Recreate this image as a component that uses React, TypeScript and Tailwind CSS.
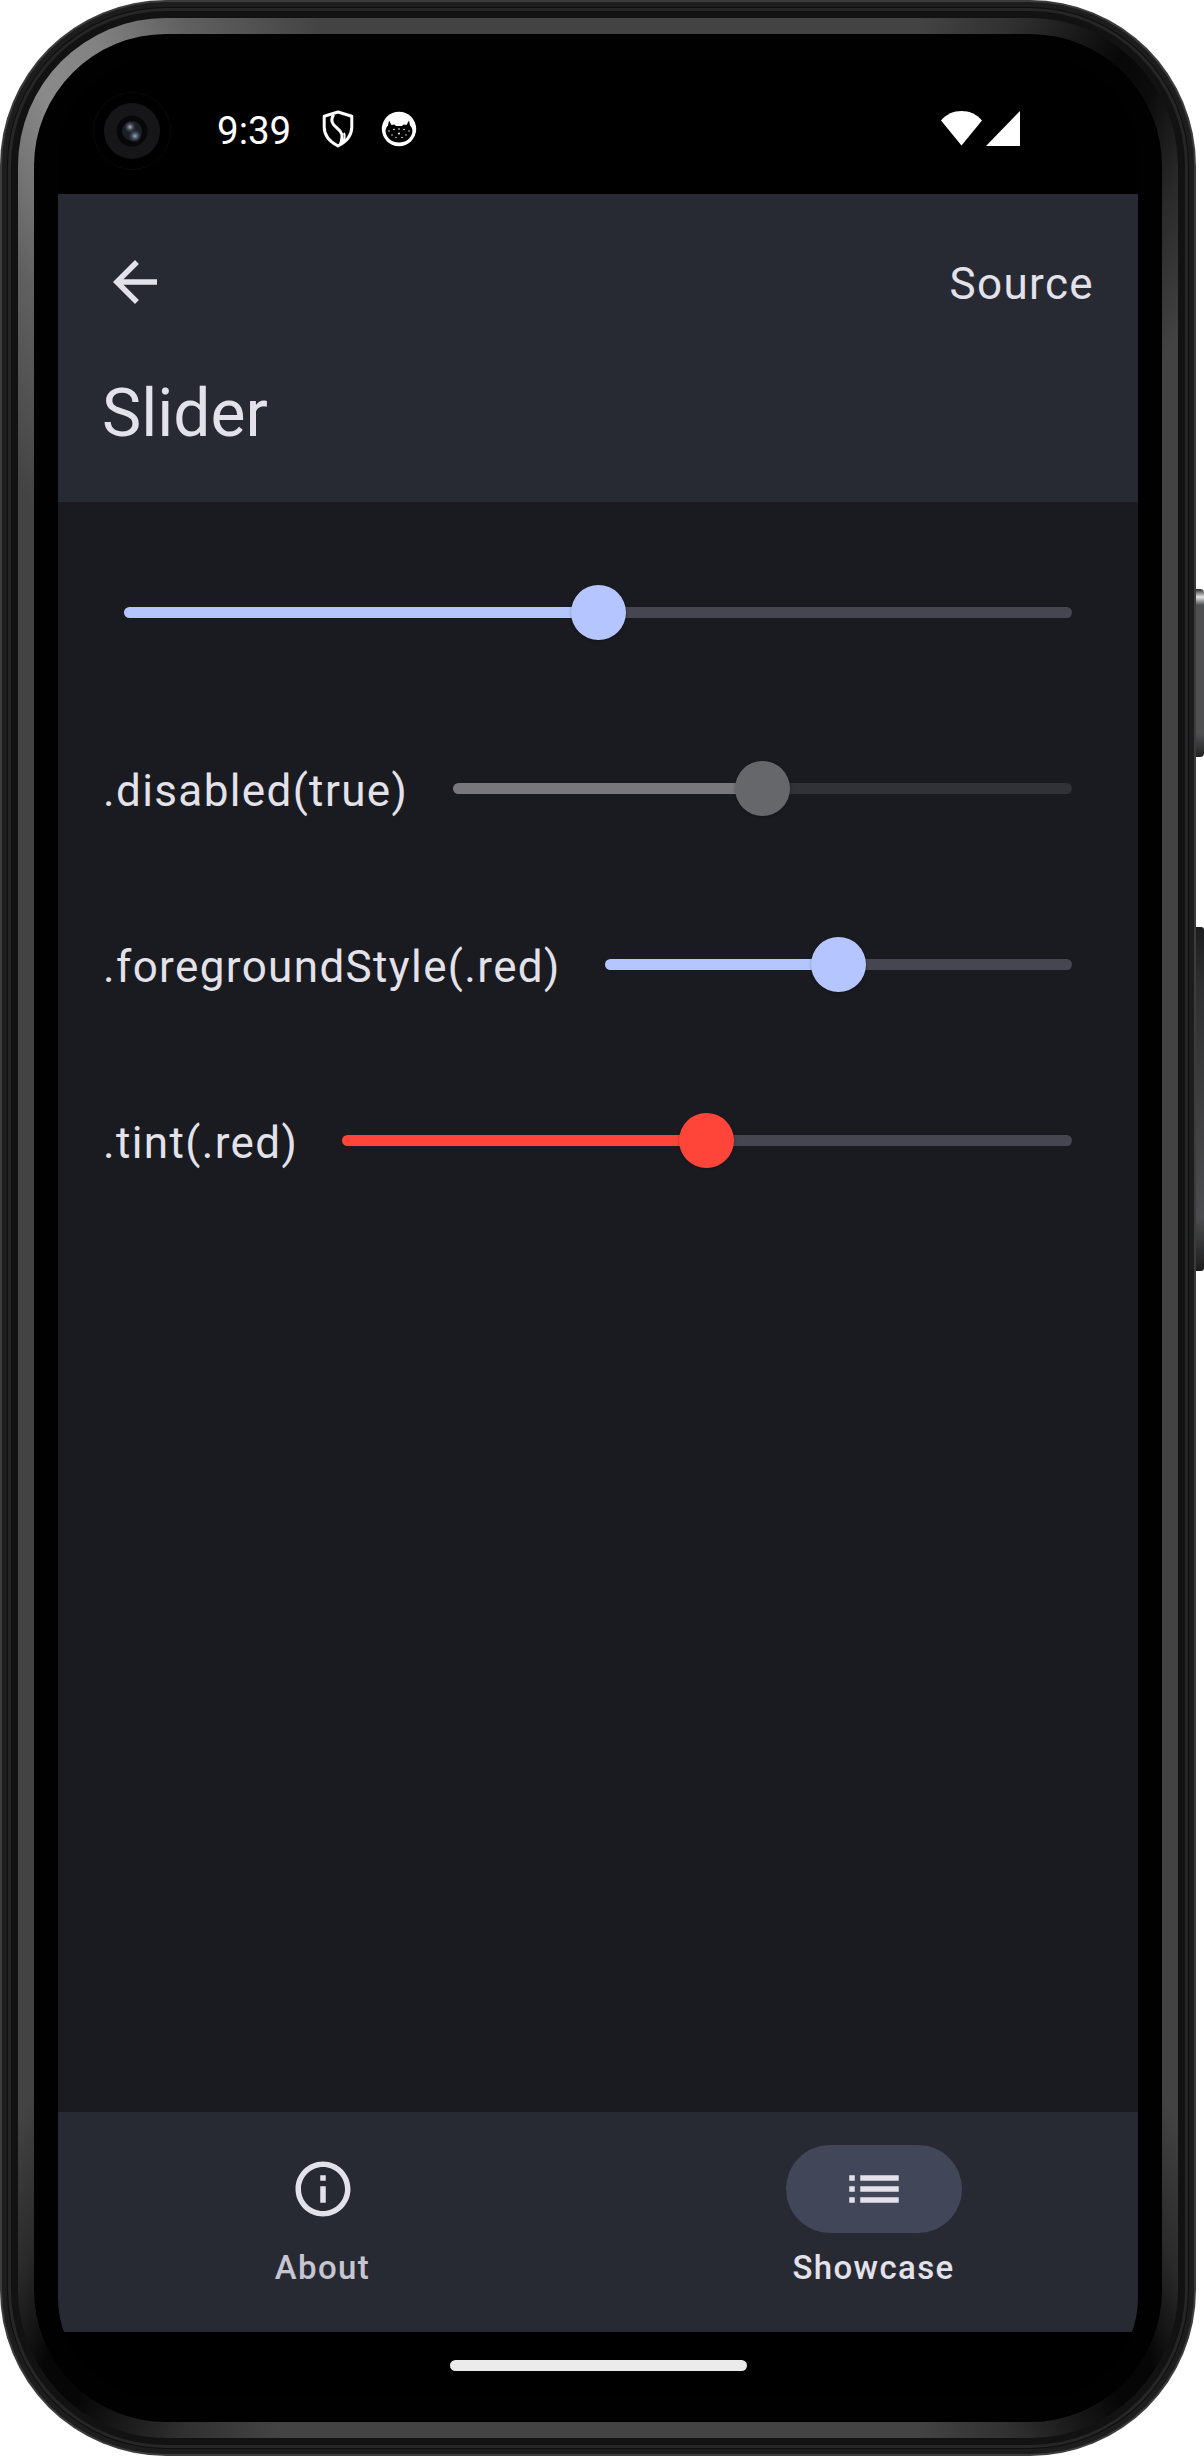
import type { ReactNode } from "react";

function Camera() {
  return (
    <div className="flex size-[78px] shrink-0 items-center justify-center rounded-full border border-[#0b0b0b]">
      <div className="flex size-14 items-center justify-center rounded-full bg-[#161618]">
        <svg className="size-8" viewBox="0 0 32 32">
          <defs>
            <radialGradient id="lensA">
              <stop offset="0" stopColor="#b4b6bc" />
              <stop offset="1" stopColor="#3a3d45" stopOpacity="0" />
            </radialGradient>
            <radialGradient id="lensB">
              <stop offset="0" stopColor="#9aaebb" />
              <stop offset="1" stopColor="#2b3a48" stopOpacity="0" />
            </radialGradient>
          </defs>
          <circle cx="16" cy="16" r="15.5" fill="#08080a" />
          <circle cx="16" cy="16" r="10" fill="#1a1e27" />
          <circle cx="14" cy="12" r="6" fill="url(#lensA)" />
          <circle cx="19" cy="21" r="7" fill="url(#lensB)" />
        </svg>
      </div>
    </div>
  );
}

function ShieldIcon() {
  return (
    <svg className="h-[38px] w-8" viewBox="0 0 32 38" fill="none" stroke="#fff" strokeWidth="3" strokeLinejoin="round">
      <path d="M16 2 2.200 6.300V17c0 8.500 6 15 13.800 19C23.800 32 29.800 25.500 29.800 17V6.300Z" />
      <path d="M11.500 4.500C8 11 10.500 14.500 15 18c5 4 6.500 7 3.500 16.500" />
      <path d="M22 23c1.500 3 .5 7-3 11" strokeWidth="2" />
    </svg>
  );
}

function CatIcon() {
  return (
    <svg className="size-[36px]" viewBox="0 0 36 36">
      <circle cx="18" cy="18" r="17.200" fill="#fff" />
      <path
        d="M8 9.500 10.500 14l3-.5L15 15h6l1.500-1.500 3 .5L28 9.500l1 5c2 2 2.800 4 2.300 7C30 27.500 25 31.500 18 31.500S6 27.500 4.700 21.500c-.500-3 .300-5 2.300-7Z"
        fill="#000"
      />
      <g fill="#fff">
        <circle cx="18" cy="18" r=".8" />
        <circle cx="13" cy="18.500" r=".8" />
        <circle cx="23" cy="18.500" r=".8" />
        <circle cx="8" cy="20" r=".7" />
        <circle cx="28" cy="20" r=".7" />
        <circle cx="18" cy="22.500" r="1" />
        <circle cx="11" cy="24" r=".7" />
        <circle cx="25" cy="24" r=".7" />
        <circle cx="15" cy="26.500" r=".7" />
        <circle cx="21" cy="26.500" r=".7" />
      </g>
    </svg>
  );
}

function StatusBar() {
  return (
    <div className="flex h-[136px] items-start bg-black pr-[118px] pl-[35px] text-white">
      <div className="mt-[34px]">
        <Camera />
      </div>
      <span className="mt-[47px] ml-[46px] w-[105px] text-[38.5px] leading-[52px]">9:39</span>
      <span className="mt-[52px]">
        <ShieldIcon />
      </span>
      <span className="mt-[53px] ml-[27px]">
        <CatIcon />
      </span>
      <div className="mt-[53px] ml-auto flex gap-1">
        <svg className="h-[35px] w-[41px]" viewBox="0 0 41 35" fill="#fff">
          <path d="M20.500 34.500 0 9.500C5.500 3 12.500 0 20.500 0S35.500 3 41 9.500Z" />
        </svg>
        <svg className="h-[35px] w-[34px]" viewBox="0 0 34 35" fill="#fff">
          <path d="M34 0v35H0Z" />
        </svg>
      </div>
    </div>
  );
}

function Header() {
  return (
    <header className="flex h-[308px] flex-col bg-[#282a33] px-11 text-[#e3e1e9]">
      <div className="mt-[55px] flex h-[66px] items-center justify-between">
        <svg className="size-[66px]" viewBox="0 0 24 24" fill="currentColor">
          <path d="M20 11H7.830l5.590-5.590L12 4l-8 8 8 8 1.410-1.410L7.830 13H20z" />
        </svg>
        <span className="mt-1 text-[44px] leading-[66px] tracking-[1.375px]">Source</span>
      </div>
      <h1 className="mt-[55px] text-[66px] leading-[88px]">Slider</h1>
    </header>
  );
}

type SliderRowProps = {
  label?: string;
  labelClass?: string;
  active: string;
  rest: string;
  thumb: string;
};

function SliderRow({ label, labelClass = "", active, rest, thumb }: SliderRowProps) {
  return (
    <div className="flex h-[132px] items-center">
      {label && (
        <span
          className={`mt-1.5 mr-[22px] shrink-0 pl-px text-[44px] leading-[66px] tracking-[1.375px] whitespace-nowrap text-[#e3e1e9] ${labelClass}`}
        >
          {label}
        </span>
      )}
      <div className="flex flex-1 items-center px-[22px]">
        <div className={`h-[11px] flex-1 rounded-l-full ${active}`} />
        <div className={`-mx-[27.5px] z-10 size-[55px] shrink-0 rounded-full shadow-[0_1px_3px_rgba(0,0,0,0.3)] ${thumb}`} />
        <div className={`h-[11px] flex-1 rounded-r-full ${rest}`} />
      </div>
    </div>
  );
}

function NavItem({ label, selected, children }: { label: string; selected?: boolean; children: ReactNode }) {
  return (
    <div className="flex flex-1 flex-col items-center pt-[33px]">
      <div className={`flex h-[88px] w-44 items-center justify-center rounded-full text-[#e3e1e9] ${selected ? "bg-[#424659]" : ""}`}>
        <svg className="size-[66px]" viewBox="0 0 24 24" fill="currentColor">
          {children}
        </svg>
      </div>
      <span
        className={`mt-[13px] text-[33px] leading-[44px] font-medium tracking-[1.375px] ${selected ? "text-[#e3e1e9]" : "text-[#c6c5d0]"}`}
      >
        {label}
      </span>
    </div>
  );
}

function Screen() {
  return (
    <div className="flex h-[2340px] w-[1080px] flex-col overflow-hidden rounded-[100px] bg-black">
      <StatusBar />
      <Header />
      <main className="flex flex-1 flex-col gap-11 bg-[#1a1b21] p-11">
        <SliderRow active="bg-[#b4c5ff]" rest="bg-[#45464f]" thumb="bg-[#b4c5ff]" />
        <SliderRow label=".disabled(true)" labelClass="w-[307px]" active="bg-[#77777c]" rest="bg-[#313238]" thumb="bg-[#66676b]" />
        <SliderRow label=".foregroundStyle(.red)" labelClass="w-[459px]" active="bg-[#b4c5ff]" rest="bg-[#45464f]" thumb="bg-[#b4c5ff]" />
        <SliderRow label=".tint(.red)" labelClass="w-[195.500px]" active="bg-[#ff453a]" rest="bg-[#45464f]" thumb="bg-[#ff453a]" />
      </main>
      <nav className="flex h-[220px] gap-[22px] bg-[#282a33]">
        <NavItem label="About">
          <path d="M11 7h2v2h-2zm0 4h2v6h-2zm1-9C6.480 2 2 6.480 2 12s4.480 10 10 10 10-4.480 10-10S17.520 2 12 2zm0 18c-4.410 0-8-3.590-8-8s3.590-8 8-8 8 3.590 8 8-3.590 8-8 8z" />
        </NavItem>
        <NavItem label="Showcase" selected>
          <path d="M3 13h2v-2H3v2zm0 4h2v-2H3v2zm0-8h2V7H3v2zm4 4h14v-2H7v2zm0 4h14v-2H7v2zM7 7v2h14V7H7z" />
        </NavItem>
      </nav>
      <div className="flex h-[66px] items-center justify-center bg-black">
        <div className="h-[11px] w-[297px] rounded-full bg-[#ebebeb]" />
      </div>
    </div>
  );
}

export default function App() {
  return (
    <div className="flex h-[2456px] w-[1204px] items-start bg-white font-[Roboto,sans-serif]">
      <div className="h-[2456px] w-[1196px] shrink-0 rounded-[166px] bg-[#3c3c3c] p-[2px]">
        <div className="h-full rounded-[164px] bg-[#1d1d1d] p-[5px]">
          <div className="h-full rounded-[159px] bg-[#0e0e0e] p-[1px]">
            <div className="h-full rounded-[158px] bg-[#262626] p-[3px]">
              <div className="h-full rounded-[155px] bg-[#121212] p-[7px]">
                <div className="h-full rounded-[148px] bg-[conic-gradient(#434343_0deg,#434343_15deg,#303030_19deg,#080808_24deg,#0c0c0c_26deg,#2a2a2a_29deg,#434343_33deg,#434343_147deg,#2a2a2a_151deg,#060606_154deg,#060606_156deg,#303030_161deg,#434343_165deg,#434343_195deg,#303030_199deg,#060606_204deg,#060606_206deg,#2a2a2a_209deg,#434343_213deg,#434343_322deg,#606060_329deg,#8a8a8a_334deg,#828282_337deg,#606060_341deg,#434343_347deg,#434343_360deg)] p-4">
                  <div className="flex h-full items-center justify-center rounded-[132px] bg-[#010101]">
                    <Screen />
                  </div>
                </div>
              </div>
            </div>
          </div>
        </div>
      </div>
      <div className="flex w-2 flex-col">
        <div className="mt-[589px] h-[168px] rounded-r-[4px] bg-[linear-gradient(#2a2a2a_0,#e5e5e5_8px,#4d4f50_16px,#4d4f50_145px,#222_168px)]" />
        <div className="mt-[170px] h-[344px] rounded-r-[3px] bg-[linear-gradient(#1c1d1e_0,#2d2f30_60px,#4b4c4f_290px,#1d1d1d_344px)]" />
      </div>
    </div>
  );
}
